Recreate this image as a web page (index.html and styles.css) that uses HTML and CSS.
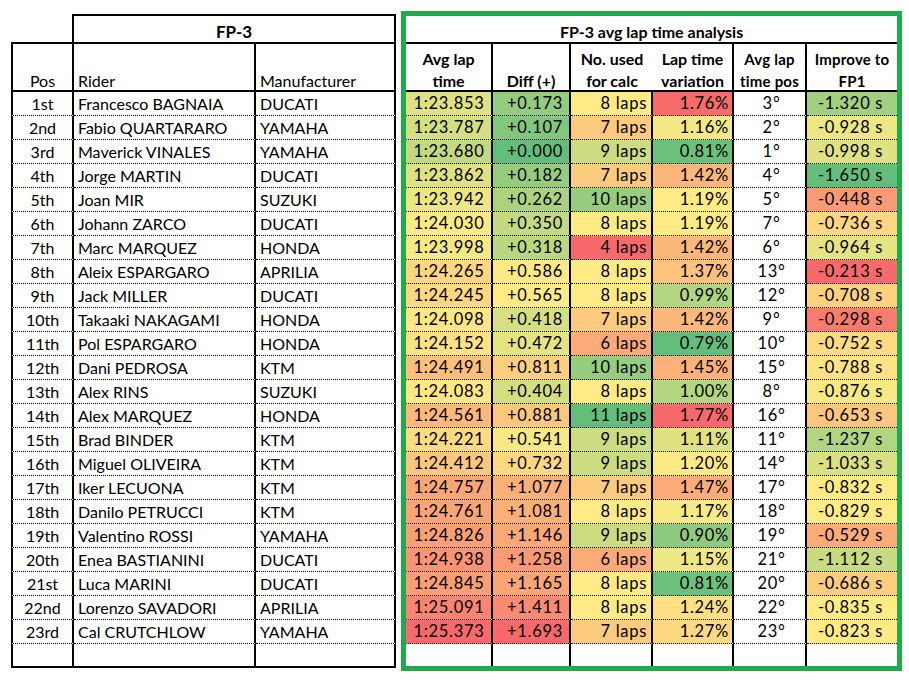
FILE: index.html
```html
<!DOCTYPE html>
<html lang="en">
<head>
<meta charset="utf-8">
<title>FP-3 avg lap time analysis</title>
<link rel="stylesheet" href="styles.css">
</head>
<body>
<div class="sheet">
  <table class="riders">
    <colgroup><col class="w-pos"><col class="w-rider"><col class="w-manu"></colgroup>
    <thead>
      <tr class="r-title"><td class="corner"></td><th colspan="2" class="title">FP-3</th></tr>
      <tr class="r-head">
        <th class="pos"><span class="hd">Pos</span></th>
        <th class="txt"><span class="hd">Rider</span></th>
        <th class="txt"><span class="hd">Manufacturer</span></th>
      </tr>
    </thead>
    <tbody>
      <tr><td class="pos">1st</td><td class="txt">Francesco BAGNAIA</td><td class="txt">DUCATI</td></tr>
      <tr><td class="pos">2nd</td><td class="txt">Fabio QUARTARARO</td><td class="txt">YAMAHA</td></tr>
      <tr><td class="pos">3rd</td><td class="txt">Maverick VINALES</td><td class="txt">YAMAHA</td></tr>
      <tr><td class="pos">4th</td><td class="txt">Jorge MARTIN</td><td class="txt">DUCATI</td></tr>
      <tr><td class="pos">5th</td><td class="txt">Joan MIR</td><td class="txt">SUZUKI</td></tr>
      <tr><td class="pos">6th</td><td class="txt">Johann ZARCO</td><td class="txt">DUCATI</td></tr>
      <tr><td class="pos">7th</td><td class="txt">Marc MARQUEZ</td><td class="txt">HONDA</td></tr>
      <tr><td class="pos">8th</td><td class="txt">Aleix ESPARGARO</td><td class="txt">APRILIA</td></tr>
      <tr><td class="pos">9th</td><td class="txt">Jack MILLER</td><td class="txt">DUCATI</td></tr>
      <tr><td class="pos">10th</td><td class="txt">Takaaki NAKAGAMI</td><td class="txt">HONDA</td></tr>
      <tr><td class="pos">11th</td><td class="txt">Pol ESPARGARO</td><td class="txt">HONDA</td></tr>
      <tr><td class="pos">12th</td><td class="txt">Dani PEDROSA</td><td class="txt">KTM</td></tr>
      <tr><td class="pos">13th</td><td class="txt">Alex RINS</td><td class="txt">SUZUKI</td></tr>
      <tr><td class="pos">14th</td><td class="txt">Alex MARQUEZ</td><td class="txt">HONDA</td></tr>
      <tr><td class="pos">15th</td><td class="txt">Brad BINDER</td><td class="txt">KTM</td></tr>
      <tr><td class="pos">16th</td><td class="txt">Miguel OLIVEIRA</td><td class="txt">KTM</td></tr>
      <tr><td class="pos">17th</td><td class="txt">Iker LECUONA</td><td class="txt">KTM</td></tr>
      <tr><td class="pos">18th</td><td class="txt">Danilo PETRUCCI</td><td class="txt">KTM</td></tr>
      <tr><td class="pos">19th</td><td class="txt">Valentino ROSSI</td><td class="txt">YAMAHA</td></tr>
      <tr><td class="pos">20th</td><td class="txt">Enea BASTIANINI</td><td class="txt">DUCATI</td></tr>
      <tr><td class="pos">21st</td><td class="txt">Luca MARINI</td><td class="txt">DUCATI</td></tr>
      <tr><td class="pos">22nd</td><td class="txt">Lorenzo SAVADORI</td><td class="txt">APRILIA</td></tr>
      <tr><td class="pos">23rd</td><td class="txt">Cal CRUTCHLOW</td><td class="txt">YAMAHA</td></tr>
      <tr class="empty"><td class="pos"></td><td class="txt"></td><td class="txt"></td></tr>
    </tbody>
  </table>

  <div class="analysis">
    <table class="laps">
      <colgroup><col class="w-avg"><col class="w-diff"><col class="w-used"><col class="w-var"><col class="w-rank"><col class="w-imp"></colgroup>
      <thead>
        <tr class="r-title"><th colspan="6" class="title">FP-3 avg lap time analysis</th></tr>
        <tr class="r-head">
          <th class="sep"><span class="hd">Avg lap<br>time</span></th>
          <th class="sep"><span class="hd">Diff (+)</span></th>
          <th><span class="hd">No. used<br>for calc</span></th>
          <th class="sep"><span class="hd">Lap time<br>variation</span></th>
          <th class="sep small"><span class="hd">Avg lap<br>time pos</span></th>
          <th class="small"><span class="hd">Improve to<br>FP1</span></th>
        </tr>
      </thead>
      <tbody>
        <tr><td class="avg">1:23.853</td><td class="diff">+0.173</td><td class="used">8 laps</td><td class="var">1.76%</td><td class="rank">3°</td><td class="imp">-1.320 s</td></tr>
        <tr><td class="avg">1:23.787</td><td class="diff">+0.107</td><td class="used">7 laps</td><td class="var">1.16%</td><td class="rank">2°</td><td class="imp">-0.928 s</td></tr>
        <tr><td class="avg">1:23.680</td><td class="diff">+0.000</td><td class="used">9 laps</td><td class="var">0.81%</td><td class="rank">1°</td><td class="imp">-0.998 s</td></tr>
        <tr><td class="avg">1:23.862</td><td class="diff">+0.182</td><td class="used">7 laps</td><td class="var">1.42%</td><td class="rank">4°</td><td class="imp">-1.650 s</td></tr>
        <tr><td class="avg">1:23.942</td><td class="diff">+0.262</td><td class="used">10 laps</td><td class="var">1.19%</td><td class="rank">5°</td><td class="imp">-0.448 s</td></tr>
        <tr><td class="avg">1:24.030</td><td class="diff">+0.350</td><td class="used">8 laps</td><td class="var">1.19%</td><td class="rank">7°</td><td class="imp">-0.736 s</td></tr>
        <tr><td class="avg">1:23.998</td><td class="diff">+0.318</td><td class="used">4 laps</td><td class="var">1.42%</td><td class="rank">6°</td><td class="imp">-0.964 s</td></tr>
        <tr><td class="avg">1:24.265</td><td class="diff">+0.586</td><td class="used">8 laps</td><td class="var">1.37%</td><td class="rank">13°</td><td class="imp">-0.213 s</td></tr>
        <tr><td class="avg">1:24.245</td><td class="diff">+0.565</td><td class="used">8 laps</td><td class="var">0.99%</td><td class="rank">12°</td><td class="imp">-0.708 s</td></tr>
        <tr><td class="avg">1:24.098</td><td class="diff">+0.418</td><td class="used">7 laps</td><td class="var">1.42%</td><td class="rank">9°</td><td class="imp">-0.298 s</td></tr>
        <tr><td class="avg">1:24.152</td><td class="diff">+0.472</td><td class="used">6 laps</td><td class="var">0.79%</td><td class="rank">10°</td><td class="imp">-0.752 s</td></tr>
        <tr><td class="avg">1:24.491</td><td class="diff">+0.811</td><td class="used">10 laps</td><td class="var">1.45%</td><td class="rank">15°</td><td class="imp">-0.788 s</td></tr>
        <tr><td class="avg">1:24.083</td><td class="diff">+0.404</td><td class="used">8 laps</td><td class="var">1.00%</td><td class="rank">8°</td><td class="imp">-0.876 s</td></tr>
        <tr><td class="avg">1:24.561</td><td class="diff">+0.881</td><td class="used">11 laps</td><td class="var">1.77%</td><td class="rank">16°</td><td class="imp">-0.653 s</td></tr>
        <tr><td class="avg">1:24.221</td><td class="diff">+0.541</td><td class="used">9 laps</td><td class="var">1.11%</td><td class="rank">11°</td><td class="imp">-1.237 s</td></tr>
        <tr><td class="avg">1:24.412</td><td class="diff">+0.732</td><td class="used">9 laps</td><td class="var">1.20%</td><td class="rank">14°</td><td class="imp">-1.033 s</td></tr>
        <tr><td class="avg">1:24.757</td><td class="diff">+1.077</td><td class="used">7 laps</td><td class="var">1.47%</td><td class="rank">17°</td><td class="imp">-0.832 s</td></tr>
        <tr><td class="avg">1:24.761</td><td class="diff">+1.081</td><td class="used">8 laps</td><td class="var">1.17%</td><td class="rank">18°</td><td class="imp">-0.829 s</td></tr>
        <tr><td class="avg">1:24.826</td><td class="diff">+1.146</td><td class="used">9 laps</td><td class="var">0.90%</td><td class="rank">19°</td><td class="imp">-0.529 s</td></tr>
        <tr><td class="avg">1:24.938</td><td class="diff">+1.258</td><td class="used">6 laps</td><td class="var">1.15%</td><td class="rank">21°</td><td class="imp">-1.112 s</td></tr>
        <tr><td class="avg">1:24.845</td><td class="diff">+1.165</td><td class="used">8 laps</td><td class="var">0.81%</td><td class="rank">20°</td><td class="imp">-0.686 s</td></tr>
        <tr><td class="avg">1:25.091</td><td class="diff">+1.411</td><td class="used">8 laps</td><td class="var">1.24%</td><td class="rank">22°</td><td class="imp">-0.835 s</td></tr>
        <tr><td class="avg">1:25.373</td><td class="diff">+1.693</td><td class="used">7 laps</td><td class="var">1.27%</td><td class="rank">23°</td><td class="imp">-0.823 s</td></tr>
        <tr class="empty"><td class="avg"></td><td class="diff"></td><td class="used"></td><td class="var"></td><td class="rank"></td><td class="imp"></td></tr>
      </tbody>
    </table>
  </div>
</div>
<script src="script.js"></script>
</body>
</html>
```

FILE: styles.css
```css
* { box-sizing: border-box; }

body {
  margin: 0;
  background: #fff;
  color: #000;
  font-family: Lato, "Liberation Sans", sans-serif;
}

.sheet {
  display: flex;
  align-items: flex-start;
  padding-left: 11px;
}

table {
  border-collapse: separate;
  border-spacing: 0;
  table-layout: fixed;
}

th, td {
  padding: 0;
  font-size: 16px;
  line-height: 23px;
  white-space: nowrap;
  overflow: hidden;
}

th { font-weight: normal; }

/* ---------- left table ---------- */
.riders { width: 385px; margin-top: 14px; }
.w-pos { width: 63px; }
.w-rider { width: 182px; }
.w-manu { width: 140px; }

.riders .r-title th,
.riders .r-title td { height: 30px; }

.riders .corner {
  border-right: 2px solid #000;
  border-bottom: 2px solid #000;
}

.riders .title {
  border-top: 2px solid #000;
  border-right: 2px solid #000;
  border-bottom: 2px solid #000;
  font-weight: bold;
  font-size: 17px;
  line-height: 21px;
  padding-top: 5px;
  vertical-align: top;
  text-align: center;
}

.r-head th {
  height: 48px;
  border-bottom: 2px solid #000;
  vertical-align: bottom;
}

.hd {
  display: block;
  line-height: 22px;
  margin-bottom: -2px;
}

.riders .pos {
  border-left: 2px solid #000;
  border-right: 2px solid #000;
  text-align: center;
}

.riders .txt {
  border-right: 2px solid #000;
  text-align: left;
  padding-left: 4px;
}

.riders tbody td {
  height: 24px;
  border-bottom: 1px dotted #000;
  vertical-align: top;
}

.riders tbody .empty td {
  border-bottom: 2px solid #000;
}

/* ---------- right table ---------- */
.analysis {
  margin-top: 11px;
  margin-left: 5px;
  border: 5px solid #1fab4b;
}

.laps { width: 491px; }
.w-avg { width: 87px; }
.w-diff { width: 78px; }
.w-used { width: 82px; }
.w-var { width: 81px; }
.w-rank { width: 73px; }
.w-imp { width: 90px; }

.laps .r-title th {
  height: 28px;
  border-bottom: 2px solid #000;
  font-weight: bold;
  line-height: 21px;
  padding-top: 5px;
  vertical-align: top;
  text-align: center;
}

.laps .r-head th {
  font-weight: bold;
  text-align: center;
}

.laps .r-head th.sep { border-right: 2px solid #000; }

.laps .r-head th.small { font-size: 15px; letter-spacing: 0.2px; }

.laps tbody td {
  height: 24px;
  border-bottom: 1px dotted #000;
  vertical-align: top;
  background: #fff;
  font-size: 16.5px;
  letter-spacing: 0.7px;
}

.laps .avg,
.laps .diff,
.laps .used,
.laps .var,
.laps .rank { border-right: 2px solid #000; }

.laps .avg { text-align: center; padding-left: 1px; }
.laps .diff { text-align: right; padding-right: 6px; }
.laps .used { text-align: right; padding-right: 4px; }
.laps .var { text-align: right; padding-right: 3px; }
.laps .rank { text-align: center; padding-left: 4px; }
.laps .imp { text-align: center; padding-right: 3px; }

.laps tbody .empty td {
  height: 22px;
  border-bottom: 0;
}
```

FILE: script.js
```js
(function () {
  var G = [99, 190, 123], Y = [255, 235, 132], R = [248, 105, 107];

  function mix(a, b, t) {
    t = Math.max(0, Math.min(1, t));
    return 'rgb(' + a.map(function (v, i) { return Math.round(v + (b[i] - v) * t); }).join(',') + ')';
  }

  function parse(cls, txt) {
    if (cls === 'avg') {
      var p = txt.split(':');
      return parseInt(p[0], 10) * 60 + parseFloat(p[1]);
    }
    if (cls === 'used') return -parseInt(txt, 10);
    return parseFloat(txt.replace('+', ''));
  }

  function median(a) {
    var s = a.slice().sort(function (x, y) { return x - y; });
    var n = s.length;
    return n % 2 ? s[(n - 1) / 2] : (s[n / 2 - 1] + s[n / 2]) / 2;
  }

  var anchors = { avg: [83.1, 84.05] };

  ['avg', 'diff', 'used', 'var', 'imp'].forEach(function (cls) {
    var cells = Array.prototype.slice.call(document.querySelectorAll('.laps tbody td.' + cls))
      .filter(function (c) { return c.textContent.trim() !== ''; });
    var vals = cells.map(function (c) { return parse(cls, c.textContent.trim()); });
    var lo = Math.min.apply(null, vals), hi = Math.max.apply(null, vals), mid = median(vals);
    if (anchors[cls]) { lo = anchors[cls][0]; mid = anchors[cls][1]; }
    cells.forEach(function (c, i) {
      var v = vals[i];
      c.style.backgroundColor = v <= mid ? mix(G, Y, (v - lo) / (mid - lo)) : mix(Y, R, (v - mid) / (hi - mid));
    });
  });
})();
```
